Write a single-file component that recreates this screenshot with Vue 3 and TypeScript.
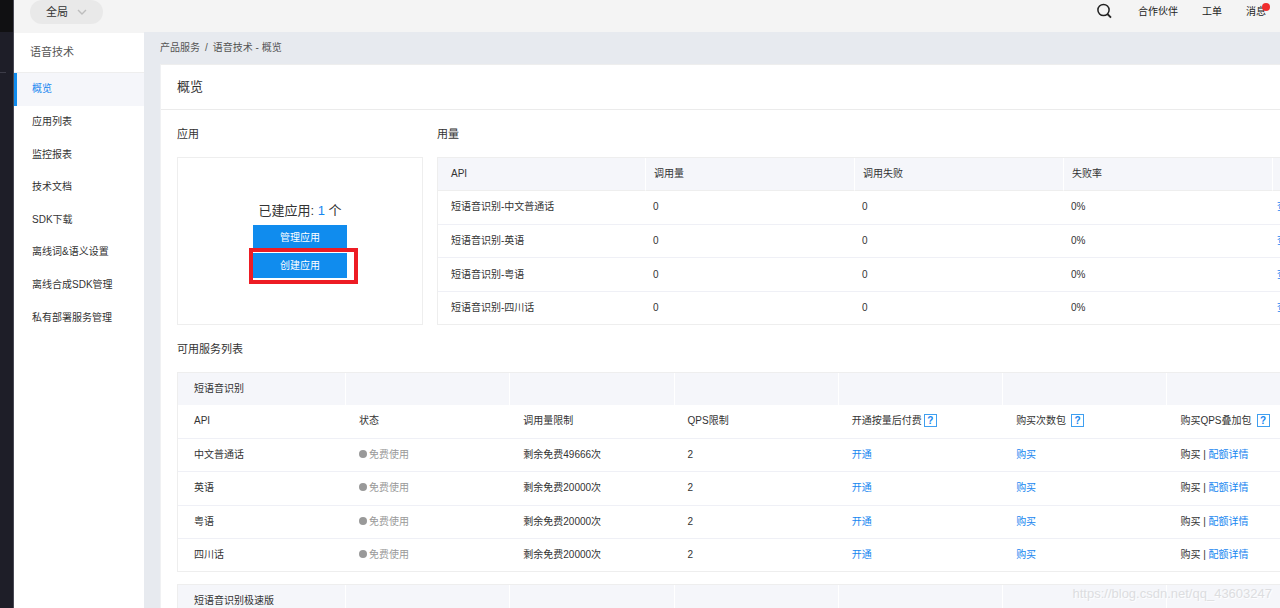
<script setup lang="ts">
interface Usage {
  name: string
  calls: string
  failures: string
  rate: string
}

interface Service {
  name: string
  quota: string
  qps: number
}

const menu: string[] = [
  '概览',
  '应用列表',
  '监控报表',
  '技术文档',
  'SDK下载',
  '离线词&语义设置',
  '离线合成SDK管理',
  '私有部署服务管理',
]

const usage: Usage[] = ['中文普通话', '英语', '粤语', '四川话'].map((n) => ({
  name: '短语音识别-' + n,
  calls: '0',
  failures: '0',
  rate: '0%',
}))

const services: Service[] = [
  { name: '中文普通话', quota: '剩余免费49666次', qps: 2 },
  { name: '英语', quota: '剩余免费20000次', qps: 2 },
  { name: '粤语', quota: '剩余免费20000次', qps: 2 },
  { name: '四川话', quota: '剩余免费20000次', qps: 2 },
]
</script>

<template>
  <div class="page">
    <div class="rail"><div class="rail-top"></div><div class="rail-mark"></div></div>
    <div class="shell">
      <header class="topbar">
        <button class="region" type="button">
          全局
          <svg width="10" height="6" viewBox="0 0 10 6" aria-hidden="true">
            <path d="M1 1 L5 5 L9 1" fill="none" stroke="#bdbdbd" stroke-width="1.4" />
          </svg>
        </button>
        <nav class="links">
          <button class="search" type="button" aria-label="搜索">
            <svg width="16" height="16" viewBox="0 0 16 16" aria-hidden="true">
              <circle cx="7.5" cy="7" r="5.6" fill="none" stroke="#222" stroke-width="1.5" />
              <path d="M11.4 11 L15 14.6" stroke="#222" stroke-width="1.8" />
            </svg>
          </button>
          <a href="#">合作伙伴</a>
          <a href="#">工单</a>
          <a href="#" class="news">消息<span class="dot"></span></a>
        </nav>
      </header>

      <div class="body">
        <aside class="sidebar">
          <h2>语音技术</h2>
          <ul>
            <li v-for="(item, i) in menu" :key="item">
              <a href="#" :class="{ active: i === 0 }">{{ item }}</a>
            </li>
          </ul>
        </aside>

        <main class="main">
          <div class="crumbs">
            <a href="#">产品服务</a><span class="slash">/</span><span>语音技术 - 概览</span>
          </div>
          <div class="panel">
            <h1>概览</h1>
            <div class="content">
              <div class="overview">
                <section class="apps">
                  <h3>应用</h3>
                  <div class="app-card">
                    <p>已建应用: <a href="#">1</a> 个</p>
                    <button type="button">管理应用</button>
                    <div class="marked">
                      <button type="button">创建应用</button>
                      <span class="frame"></span>
                    </div>
                  </div>
                </section>
                <section class="usage">
                  <h3>用量</h3>
                  <table class="usage-table">
                    <colgroup>
                      <col class="first" /><col class="mid" /><col class="mid" /><col class="mid" /><col />
                    </colgroup>
                    <thead>
                      <tr><th>API</th><th>调用量</th><th>调用失败</th><th>失败率</th><th></th></tr>
                    </thead>
                    <tbody>
                      <tr v-for="u in usage" :key="u.name">
                        <td>{{ u.name }}</td>
                        <td>{{ u.calls }}</td>
                        <td>{{ u.failures }}</td>
                        <td>{{ u.rate }}</td>
                        <td class="ops"><a href="#">查看</a></td>
                      </tr>
                    </tbody>
                  </table>
                </section>
              </div>

              <h3 class="list-title">可用服务列表</h3>
              <table class="service-table">
                <colgroup><col class="first" /><col v-for="n in 7" :key="n" /></colgroup>
                <thead>
                  <tr><th>短语音识别</th><th v-for="n in 7" :key="n"></th></tr>
                </thead>
                <tbody>
                  <tr>
                    <td>API</td>
                    <td>状态</td>
                    <td>调用量限制</td>
                    <td>QPS限制</td>
                    <td>开通按量后付费<button class="help" type="button">?</button></td>
                    <td>购买次数包<button class="help wide" type="button">?</button></td>
                    <td>购买QPS叠加包<button class="help wide" type="button">?</button></td>
                    <td></td>
                  </tr>
                  <tr v-for="s in services" :key="s.name">
                    <td>{{ s.name }}</td>
                    <td class="status"><span class="bullet"></span>免费使用</td>
                    <td>{{ s.quota }}</td>
                    <td>{{ s.qps }}</td>
                    <td><a href="#">开通</a></td>
                    <td><a href="#">购买</a></td>
                    <td>购买 | <a href="#">配额详情</a></td>
                    <td></td>
                  </tr>
                </tbody>
              </table>
              <table class="service-table next">
                <colgroup><col class="first" /><col v-for="n in 7" :key="n" /></colgroup>
                <thead>
                  <tr><th>短语音识别极速版</th><th v-for="n in 7" :key="n"></th></tr>
                </thead>
              </table>
            </div>
          </div>
        </main>
      </div>
    </div>
    <div class="watermark">https://blog.csdn.net/qq_43603247</div>
  </div>
</template>

<style>
body {
  margin: 0;
}
</style>

<style scoped>
.page {
  display: flex;
  position: relative;
  height: 100vh;
  overflow: hidden;
  font: 10px/16px "Liberation Sans", "Noto Sans CJK SC", sans-serif;
  color: #333;
  background: #e7eaef;
}
.page * {
  box-sizing: border-box;
}
a {
  color: #1686f0;
  text-decoration: none;
}
button {
  font: inherit;
  padding: 0;
  border: 0;
  cursor: pointer;
}
h1,
h2,
h3,
p,
ul {
  margin: 0;
  padding: 0;
  font-weight: 400;
}
.rail {
  flex: none;
  width: 14px;
  background: #1e1e28;
  border-right: 1px solid #4a4a55;
}
.rail-top {
  height: 32px;
  background: #101012;
}
.rail-mark {
  width: 6px;
  height: 1px;
  margin-top: 40px;
  background: #3c3c48;
}
.shell {
  flex: 1;
  min-width: 0;
  display: flex;
  flex-direction: column;
}
.topbar {
  flex: none;
  display: flex;
  justify-content: space-between;
  align-items: flex-start;
  height: 32px;
  padding: 0 14px 0 16px;
  background: #f4f4f4;
}
.region {
  display: flex;
  align-items: center;
  gap: 9px;
  height: 24px;
  padding: 0 16px;
  border-radius: 12px;
  background: #e9e9e9;
  color: #333;
  font-size: 11px;
}
.links {
  display: flex;
  align-items: center;
  gap: 24px;
  height: 24px;
}
.links a {
  color: #222;
}
.search {
  display: flex;
  margin: 0 2px 2px 0;
  background: none;
}
.news {
  position: relative;
}
.dot {
  position: absolute;
  top: -1px;
  right: -4px;
  width: 8px;
  height: 8px;
  border-radius: 50%;
  background: #f02d2d;
}
.body {
  flex: 1;
  min-height: 0;
  display: flex;
}
.sidebar {
  flex: none;
  width: 130px;
  border-top: 1px solid #f4f4f4;
  background: #fff;
}
.sidebar h2 {
  height: 40px;
  padding-left: 16px;
  border-bottom: 1px solid #eee;
  font-size: 11px;
  line-height: 39px;
  color: #555;
}
.sidebar ul {
  display: grid;
  grid-auto-rows: 1fr;
  height: 261px;
  list-style: none;
}
.sidebar li {
  display: flex;
}
.sidebar li a {
  flex: 1;
  display: flex;
  align-items: center;
  padding-left: 15px;
  border-left: 3px solid transparent;
  color: #333;
}
.sidebar li a.active {
  border-left-color: #108cee;
  background: #f5f6fa;
  color: #1686f0;
}
.main {
  flex: 1;
  min-width: 0;
  padding-left: 16px;
  overflow: hidden;
}
.crumbs {
  height: 32px;
  line-height: 31px;
  color: #555;
}
.crumbs a {
  color: #555;
}
.slash {
  margin: 0 5px;
}
.panel {
  width: 100%;
  min-width: 1352px;
  min-height: 100%;
  border-top: 1px solid #eee;
  border-left: 1px solid #f0f1f3;
  background: #fff;
}
h1 {
  height: 45px;
  padding-left: 16px;
  border-bottom: 1px solid #ebebeb;
  font-size: 13px;
  line-height: 44px;
}
.content {
  padding: 0 16px;
}
h3 {
  height: 47px;
  font-size: 11px;
  line-height: 48px;
}
.overview {
  display: flex;
  gap: 14px;
}
.apps {
  flex: none;
  width: 246px;
}
.app-card {
  display: flex;
  flex-direction: column;
  align-items: center;
  height: 168px;
  padding-top: 39px;
  border: 1px solid #eee;
}
.app-card p {
  font-size: 13px;
  line-height: 28px;
}
.app-card button {
  display: block;
  width: 94px;
  height: 25px;
  background: #108cee;
  color: #fff;
}
.marked {
  position: relative;
  margin-top: 3px;
}
.frame {
  position: absolute;
  top: -5px;
  right: -11px;
  bottom: -6px;
  left: -4px;
  border: 4px solid #ed1c24;
  pointer-events: none;
}
.usage {
  flex: 1;
}
table {
  width: 100%;
  table-layout: fixed;
  border-collapse: separate;
  border-spacing: 0;
  border: 1px solid #eee;
}
th,
td {
  padding: 0;
  text-align: left;
  font-weight: 400;
  white-space: nowrap;
}
th {
  height: 32px;
  background: #f5f6fa;
}
th + th {
  border-left: 1px solid #fff;
}
td {
  border-bottom: 1px solid #eff0f6;
}
tbody tr:last-child td {
  border-bottom: 0;
}
.usage-table {
  height: 168px;
}
.usage-table .first {
  width: 207px;
}
.usage-table .mid {
  width: 209px;
}
.usage-table th {
  height: 33px;
  padding-left: 8px;
  border-bottom: 1px solid #eee;
}
.usage-table td {
  padding-left: 8px;
}
.usage-table th:first-child,
.usage-table td:first-child {
  padding-left: 13px;
}
.usage-table .ops {
  padding-left: 5px;
}
.service-table {
  height: 200px;
}
.service-table .first {
  width: 167px;
}
.service-table th,
.service-table td {
  padding-left: 14px;
}
.service-table th:first-child,
.service-table td:first-child {
  padding-left: 16px;
}
.service-table.next {
  height: 33px;
  margin-top: 12px;
}
.help {
  width: 13px;
  height: 13px;
  margin-left: 2px;
  border: 1px solid #3f9ff0;
  background: #fff;
  color: #1686f0;
  font-weight: 700;
  line-height: 11px;
  text-align: center;
}
.help.wide {
  margin-left: 5px;
}
.status {
  color: #999;
}
.bullet {
  display: inline-block;
  width: 8px;
  height: 8px;
  margin-right: 2px;
  border-radius: 50%;
  background: #999;
}
.watermark {
  position: absolute;
  right: 8px;
  bottom: 6px;
  font-size: 13px;
  color: #dcdde0;
  text-shadow: 1px 1px 1px #fff;
  pointer-events: none;
}
</style>
